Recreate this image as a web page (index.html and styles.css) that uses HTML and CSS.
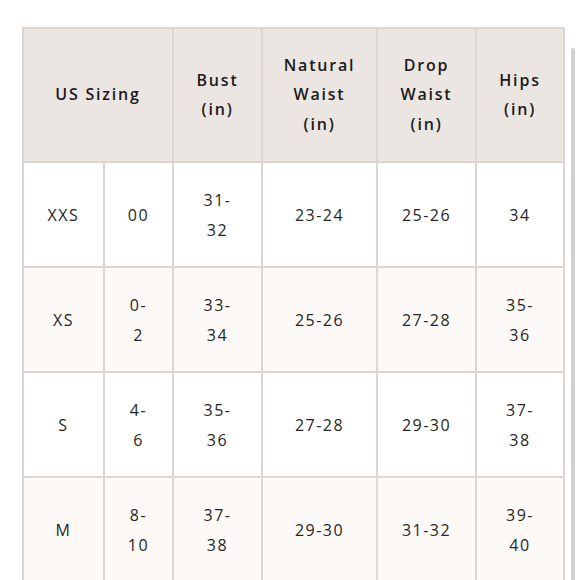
FILE: index.html
```html
<!DOCTYPE html>
<html>
<head>
<meta charset="utf-8">
<link rel="stylesheet" href="styles.css">
</head>
<body>
<div class="page">
  <table class="size-table">
    <colgroup>
      <col class="c1"><col class="c2"><col class="c3"><col class="c4"><col class="c5"><col class="c6">
    </colgroup>
    <thead>
      <tr class="head-row">
        <th colspan="2">US Sizing</th>
        <th>Bust<br>(in)</th>
        <th>Natural<br>Waist<br>(in)</th>
        <th>Drop<br>Waist<br>(in)</th>
        <th>Hips<br>(in)</th>
      </tr>
    </thead>
    <tbody>
      <tr class="row">
        <td>XXS</td><td>00</td><td>31-<br>32</td><td>23-24</td><td>25-26</td><td>34</td>
      </tr>
      <tr class="row alt">
        <td>XS</td><td>0-<br>2</td><td>33-<br>34</td><td>25-26</td><td>27-28</td><td>35-<br>36</td>
      </tr>
      <tr class="row">
        <td>S</td><td>4-<br>6</td><td>35-<br>36</td><td>27-28</td><td>29-30</td><td>37-<br>38</td>
      </tr>
      <tr class="row alt">
        <td>M</td><td>8-<br>10</td><td>37-<br>38</td><td>29-30</td><td>31-32</td><td>39-<br>40</td>
      </tr>
    </tbody>
  </table>
  <div class="scrollbar"></div>
</div>
</body>
</html>
```
FILE: styles.css
```css
html, body {
  margin: 0;
  padding: 0;
  background: #ffffff;
  overflow: hidden;
}
.page {
  position: relative;
  width: 580px;
  height: 580px;
  padding: 27px 0 0 22px;
  box-sizing: border-box;
  font-family: "Open Sans", "Liberation Sans", sans-serif;
  color: #1f1f1f;
}
.size-table {
  border-collapse: collapse;
  table-layout: fixed;
  width: 543px;
}
.c1 { width: 81px; }
.c2 { width: 69px; }
.c3 { width: 89px; }
.c4 { width: 115px; }
.c5 { width: 99px; }
.c6 { width: 88px; }
.size-table th,
.size-table td {
  border: 2px solid #dbd6d3;
  text-align: center;
  vertical-align: middle;
  padding: 0;
}
.size-table th {
  background: #ece6e2;
  font-weight: 600;
  font-size: 16px;
  letter-spacing: 1.8px;
  line-height: 29.5px;
  color: #1a1a1a;
}
.head-row { height: 134px; }
.row { height: 105px; }
.size-table td {
  font-size: 16px;
  font-weight: 400;
  letter-spacing: 1.5px;
  line-height: 30px;
  background: #ffffff;
  color: #262626;
}
.row.alt td { background: #fdf9f7; }
.scrollbar {
  position: absolute;
  left: 571px;
  top: 48px;
  width: 4px;
  height: 540px;
  border-radius: 2px;
  background: #d0d0d0;
}
```
